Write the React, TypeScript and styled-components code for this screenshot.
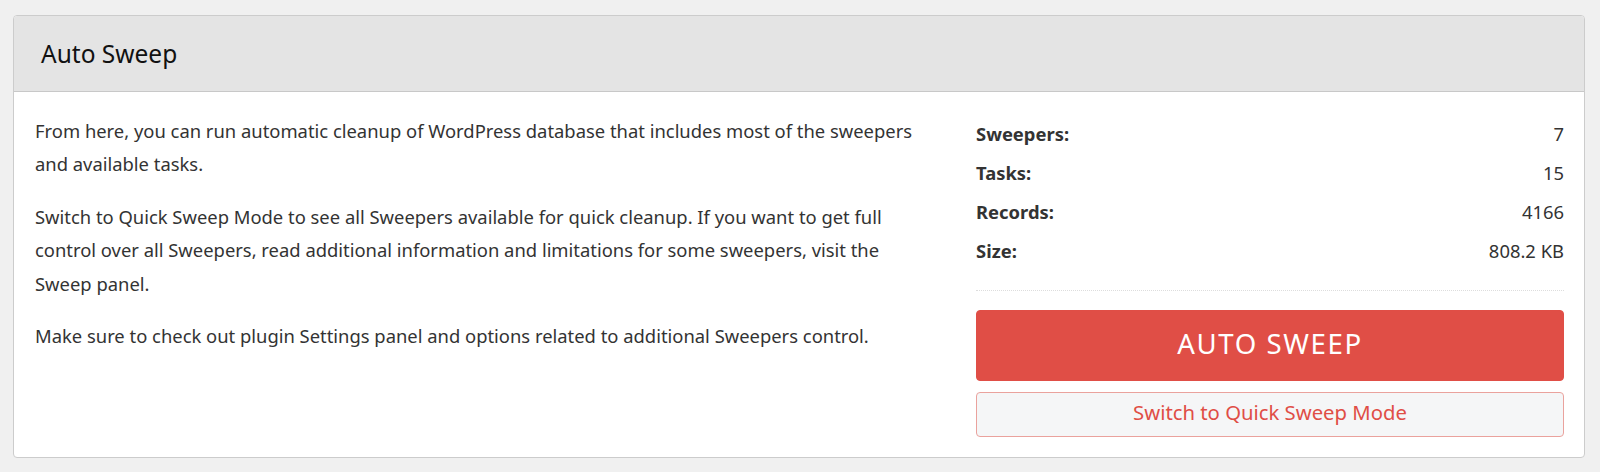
import React from "react";
import styled, { createGlobalStyle } from "styled-components";

const GlobalStyle = createGlobalStyle`
  html, body {
    margin: 0;
    padding: 0;
    background: #f0f0f0;
  }
  body {
    font-family: "Noto Sans", "Open Sans", sans-serif;
    color: #333333;
  }
`;

const Page = styled.div`
  padding: 15px 15px 15px 13px;
`;

const Panel = styled.section`
  background: #ffffff;
  border: 1px solid #cccccc;
  border-radius: 4px;
  overflow: hidden;
`;

const Header = styled.header`
  background: #e4e4e4;
  border-bottom: 1px solid #c8c8c8;
  height: 75px;
  display: flex;
  align-items: center;
  padding: 0 27px;
`;

const Title = styled.h2`
  margin: 0;
  font-size: 24.5px;
  font-weight: 400;
  color: #111111;
  line-height: 1;
  padding-top: 2px;
`;

const Body = styled.div`
  display: grid;
  grid-template-columns: 1fr 588px;
  column-gap: 40px;
  padding: 22px 20px 20px 21px;
`;

const Intro = styled.div`
  font-size: 18.4px;
  line-height: 33.3px;
`;

const Para = styled.p`
  margin: 0 0 19.4px;
`;

const Side = styled.div`
  display: flex;
  flex-direction: column;
`;

const Stats = styled.dl`
  margin: 2.5px 0 0;
  display: flex;
  flex-direction: column;
  gap: 6px;
`;

const StatRow = styled.div`
  display: flex;
  justify-content: space-between;
  font-size: 18.4px;
  line-height: 33px;
`;

const StatLabel = styled.dt`
  font-weight: 700;
  color: #333333;
`;

const StatValue = styled.dd`
  margin: 0;
  color: #333333;
`;

const Divider = styled.hr`
  margin: 23px 0 19px;
  border: 0;
  border-top: 1px dotted #dddddd;
  height: 0;
`;

const Button = styled.button<{ $variant?: "primary" | "secondary" }>`
  display: block;
  width: 100%;
  box-sizing: border-box;
  font-family: "Noto Sans", "Open Sans", sans-serif;
  cursor: pointer;
  border-radius: 4px;
  text-align: center;
  ${({ $variant }) =>
    $variant === "secondary"
      ? `
    margin-top: 11px;
    height: 45px;
    background: #f5f6f7;
    border: 1px solid #eaa29d;
    color: #e04e46;
    font-size: 20.3px;
    line-height: 1;
    padding: 0 0 3px;
  `
      : `
    height: 71px;
    background: #e04e46;
    border: 1px solid #e04e46;
    color: #ffffff;
    font-size: 27.6px;
    letter-spacing: 1.6px;
    line-height: 1;
    padding: 0 0 3px;
  `}
`;

const stats = [
  { label: "Sweepers:", value: "7" },
  { label: "Tasks:", value: "15" },
  { label: "Records:", value: "4166" },
  { label: "Size:", value: "808.2 KB" },
];

export default function App() {
  return (
    <>
      <GlobalStyle />
      <Page>
        <Panel>
          <Header>
            <Title>Auto Sweep</Title>
          </Header>
          <Body>
            <Intro>
              <Para>
                From here, you can run automatic cleanup of WordPress database that includes most of the
                sweepers and available tasks.
              </Para>
              <Para>
                Switch to Quick Sweep Mode to see all Sweepers available for quick cleanup. If you want to get
                full control over all Sweepers, read additional information and limitations for some sweepers,
                visit the Sweep panel.
              </Para>
              <Para>
                Make sure to check out plugin Settings panel and options related to additional Sweepers
                control.
              </Para>
            </Intro>
            <Side>
              <Stats>
                {stats.map((s) => (
                  <StatRow key={s.label}>
                    <StatLabel>{s.label}</StatLabel>
                    <StatValue>{s.value}</StatValue>
                  </StatRow>
                ))}
              </Stats>
              <Divider />
              <Button $variant="primary">AUTO SWEEP</Button>
              <Button $variant="secondary">Switch to Quick Sweep Mode</Button>
            </Side>
          </Body>
        </Panel>
      </Page>
    </>
  );
}
